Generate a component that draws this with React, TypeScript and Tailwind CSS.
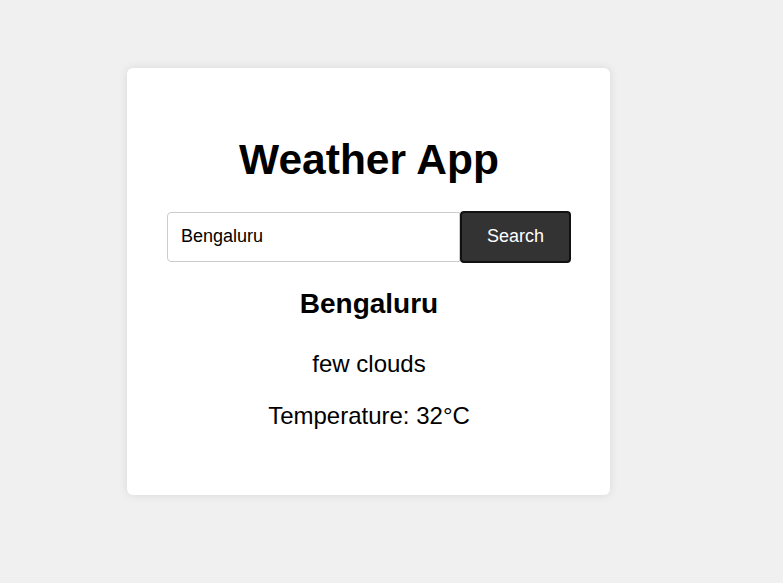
import { useState } from 'react';

export default function App() {
  const [city, setCity] = useState('Bengaluru');

  return (
    <div className="min-h-[583px] bg-[#f0f0f0] pt-[68px] pl-[127px] font-['Liberation_Sans',Arial,sans-serif] text-black">
      <div className="w-[483px] rounded-[6px] bg-white py-10 pr-[39px] pl-10 text-center shadow-[0_0_10px_rgba(0,0,0,0.1)]">
        <h1 className="mt-[28px] mb-[26px] text-[42.5px] leading-[1.15] font-bold">Weather App</h1>

        <div className="flex items-center">
          <input
            className="h-[50px] flex-1 rounded-l-[4px] border border-[#ccc] px-[13px] text-[18px] text-black outline-none"
            onChange={(e) => setCity(e.target.value)}
            value={city}
          />
          <button className="h-[52px] w-[111px] rounded-[4px] border-2 border-[#111] bg-[#333] text-[18px] text-white">
            Search
          </button>
        </div>

        {/* Result */}
        <div>
          <h2 className="mt-[25px] text-[28px] leading-[1.15] font-bold">Bengaluru</h2>
          <p className="mt-[30px] text-[24px] leading-[1.15]">few clouds</p>
          <p className="mt-[24px] mb-[26px] text-[24px] leading-[1.15]">Temperature: 32°C</p>
        </div>
      </div>
    </div>
  );
}
